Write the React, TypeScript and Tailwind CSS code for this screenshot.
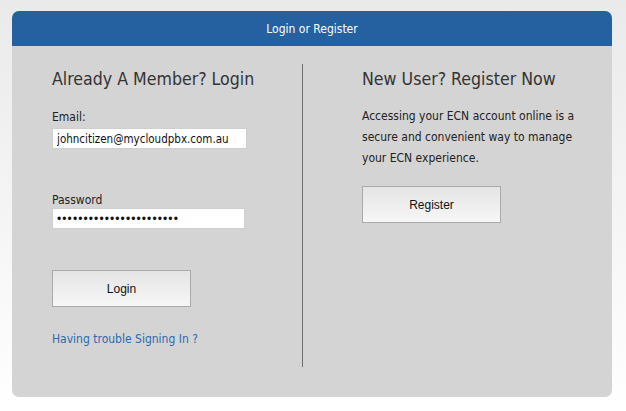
const font = "font-['DejaVu_Sans_Condensed','Liberation_Sans',sans-serif]";

function GrayButton({ label }: { label: string }) {
  return (
    <button
      type="button"
      className="h-[37px] w-[139px] border border-[#aaaaaa] bg-gradient-to-b from-[#e5e5e5] to-[#f6f6f6] font-['Liberation_Sans',sans-serif] text-[12px] text-[#111]"
    >
      {label}
    </button>
  );
}

export default function App() {
  return (
    <div className={`min-h-[411px] w-full bg-gradient-to-b from-[#eaeaea] to-white px-[12px] pt-[11px] pb-[15px] ${font}`}>
      <div className="w-[600px] overflow-hidden rounded-[7px] bg-[#d4d4d4]">
        <div className="flex h-[35px] items-center justify-center bg-[#2561a0] text-[12px] text-white">
          Login or Register
        </div>

        <div className="flex pt-[18px] pb-[30px]">
          <div className="w-[291px] border-r border-[#707070] pl-[40px]">
            <h2 className="mt-[4px] text-[17.6px] leading-[22px] text-[#333]">
              Already A Member? Login
            </h2>

            <label className="mt-[20px] block text-[12px] leading-[15px] text-[#222]">
              Email:
            </label>
            <input
              readOnly
              value="johncitizen@mycloudpbx.com.au"
              className="mt-[3px] block h-[21px] w-[195px] border border-[#cfcfcf] bg-white px-[4px] text-[11.5px] text-[#111] outline-none"
            />

            <label className="mt-[44px] block text-[12px] leading-[15px] text-[#222]">
              Password
            </label>
            <input
              readOnly
              type="password"
              value="johncitizen123456789012"
              className="mt-0 block h-[21px] w-[193px] border border-[#cfcfcf] bg-white px-[4px] font-['Liberation_Sans',sans-serif] text-[12px] tracking-[1.1px] text-[#111] outline-none"
            />

            <div className="mt-[41px]">
              <GrayButton label="Login" />
            </div>

            <a href="#" className="mt-[25px] block text-[12px] leading-[15px] text-[#2a6aad]">
              Having trouble Signing In ?
            </a>

            <div className="h-[20px]" />
          </div>

          <div className="flex-1 pl-[59px]">
            <h2 className="mt-[4px] text-[17.6px] leading-[22px] text-[#333]">
              New User? Register Now
            </h2>
            <p className="mt-[16px] w-[215px] text-[12px] leading-[21px] text-[#222]">
              Accessing your ECN account online is a secure and convenient way to manage your ECN
              experience.
            </p>
            <div className="mt-[17px]">
              <GrayButton label="Register" />
            </div>
          </div>
        </div>
      </div>
    </div>
  );
}
